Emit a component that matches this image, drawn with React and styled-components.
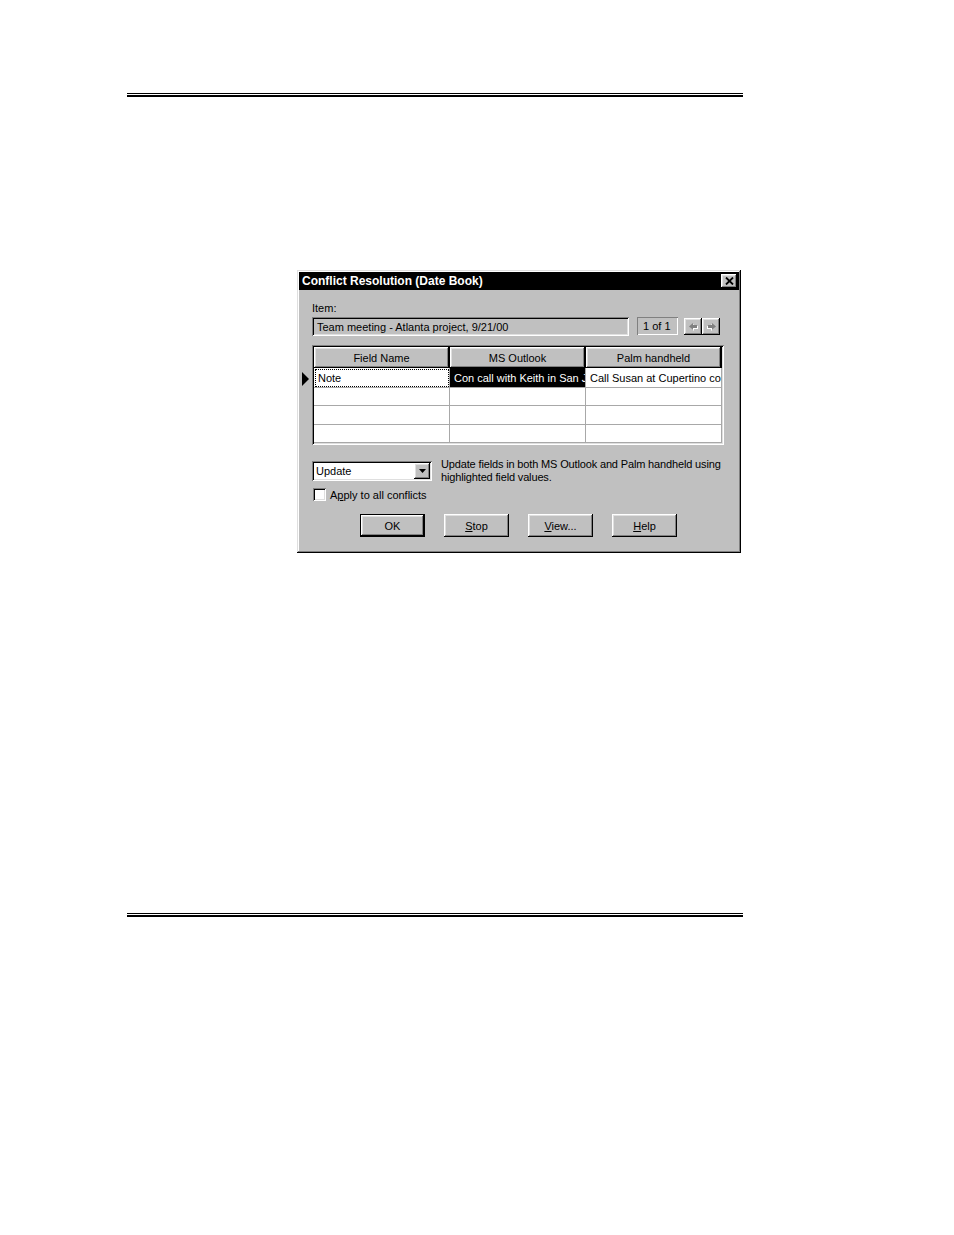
import React from "react";
import styled, { createGlobalStyle } from "styled-components";

const GlobalStyle = createGlobalStyle`
  html, body {
    margin: 0;
    padding: 0;
    background: #fff;
  }
  body {
    font-family: "Liberation Sans", Arial, sans-serif;
    font-size: 11px;
    color: #000;
  }
`;

const raised = `
  box-shadow: inset -1px -1px #000, inset 1px 1px #fff,
    inset -2px -2px #808080, inset 2px 2px #dfdfdf;
`;

const sunken = `
  box-shadow: inset 1px 1px #808080, inset -1px -1px #fff,
    inset 2px 2px #000, inset -2px -2px #dfdfdf;
`;

const Page = styled.div`
  width: 954px;
  height: 1235px;
  box-sizing: border-box;
  padding: 93px 0 0 127px;
  background: #fff;
`;

const Rule = styled.div`
  width: 616px;
  height: 4px;
  box-sizing: border-box;
  border-top: 1px solid #000;
  border-bottom: 2px solid #000;
  margin-top: ${(p) => p.$top || 0}px;
`;

const Dialog = styled.div`
  margin: 173px 0 0 170px;
  width: 444px;
  height: 283px;
  box-sizing: border-box;
  padding: 2px;
  background: #c0c0c0;
  box-shadow: inset -1px -1px #000, inset 1px 1px #dfdfdf,
    inset -2px -2px #808080, inset 2px 2px #fff;
  display: flex;
  flex-direction: column;
`;

const TitleBar = styled.div`
  height: 18px;
  background: #000;
  color: #fff;
  font-weight: bold;
  font-size: 12px;
  display: flex;
  align-items: center;
  justify-content: space-between;
  padding: 0 2px 0 3px;
`;

const CloseButton = styled.div`
  width: 16px;
  height: 14px;
  background: #c0c0c0;
  ${raised}
  display: flex;
  align-items: center;
  justify-content: center;
`;

const Body = styled.div`
  padding: 0 15px 0 13px;
  display: flex;
  flex-direction: column;
`;

const Label = styled.div`
  margin-top: 11px;
  line-height: 14px;
  height: 14px;
`;

const ItemRow = styled.div`
  margin-top: 2px;
  display: flex;
  align-items: flex-start;
`;

const Field = styled.div`
  flex-shrink: 0;
  width: ${(p) => p.$w}px;
  height: ${(p) => p.$h || 19}px;
  box-sizing: border-box;
  background: ${(p) => (p.$white ? "#fff" : "#c0c0c0")};
  ${sunken}
  display: flex;
  align-items: center;
  padding-left: 5px;
  white-space: nowrap;
  overflow: hidden;
`;

const Counter = styled.div`
  flex-shrink: 0;
  margin-left: 8px;
  width: 41px;
  height: 18px;
  box-sizing: border-box;
  box-shadow: inset 1px 1px #808080, inset -1px -1px #fff;
  display: flex;
  align-items: center;
  padding-left: 6px;
`;

const NavGroup = styled.div`
  margin: 1px 0 0 6px;
  display: flex;
`;

const NavButton = styled.div`
  width: 18px;
  height: 17px;
  background: #c0c0c0;
  ${raised}
  display: flex;
  align-items: center;
  justify-content: center;
`;

const GridWrap = styled.div`
  position: relative;
  margin-top: 9px;
  width: 412px;
  height: 100px;
  box-sizing: border-box;
  padding: 2px;
  background: #c0c0c0;
  box-shadow: inset 1px 1px #808080, inset -1px -1px #fff,
    inset 2px 2px #000, inset -2px -2px #dfdfdf;
`;

const RowMarker = styled.div`
  position: absolute;
  left: -10px;
  top: 27px;
  width: 0;
  height: 0;
  border-top: 7px solid transparent;
  border-bottom: 7px solid transparent;
  border-left: 7px solid #000;
`;

const GridRow = styled.div`
  display: flex;
  height: ${(p) => p.$h}px;
  background: ${(p) => (p.$head ? "#c0c0c0" : "#fff")};
`;

const HeadCell = styled.div`
  width: 136px;
  box-sizing: border-box;
  ${raised}
  display: flex;
  align-items: center;
  justify-content: center;
  border-right: 1px solid #000;
`;

const Cell = styled.div`
  width: 136px;
  box-sizing: border-box;
  border-right: 1px solid #a8a8a8;
  border-bottom: 1px solid #a8a8a8;
  padding-left: 4px;
  white-space: nowrap;
  overflow: hidden;
  display: flex;
  align-items: center;
  background: ${(p) => (p.$selected ? "#000" : "#fff")};
  color: ${(p) => (p.$selected ? "#fff" : "#000")};
  outline: ${(p) => (p.$focus ? "1px dotted #000" : "none")};
  outline-offset: -2px;
`;

const OptionsRow = styled.div`
  margin-top: 13px;
  display: flex;
  align-items: flex-start;
`;

const Select = styled.div`
  flex-shrink: 0;
  margin-top: 3px;
  width: 120px;
  height: 20px;
  box-sizing: border-box;
  background: #fff;
  ${sunken}
  display: flex;
  align-items: center;
  justify-content: space-between;
  padding: 2px 2px 2px 4px;
`;

const SelectArrow = styled.div`
  width: 16px;
  height: 16px;
  background: #c0c0c0;
  ${raised}
  display: flex;
  align-items: center;
  justify-content: center;
`;

const Description = styled.div`
  margin-left: 9px;
  line-height: 13px;
  white-space: nowrap;
  letter-spacing: -0.15px;
`;

const CheckRow = styled.div`
  margin-top: 4px;
  display: flex;
  align-items: center;
  padding-left: 1px;
`;

const CheckBox = styled.div`
  width: 13px;
  height: 13px;
  box-sizing: border-box;
  background: #fff;
  ${sunken}
  margin-right: 4px;
`;

const ButtonRow = styled.div`
  margin-top: 13px;
  display: flex;
  justify-content: center;
  gap: 19px;
  padding-left: 1px;
`;

const Button = styled.div`
  width: 65px;
  height: 23px;
  box-sizing: border-box;
  background: #c0c0c0;
  display: flex;
  align-items: center;
  justify-content: center;
  ${(p) =>
    p.$default
      ? `box-shadow: inset 0 0 0 1px #000, inset -2px -2px #000, inset 2px 2px #fff,
          inset -3px -3px #808080, inset 3px 3px #dfdfdf;`
      : raised}
`;

const Arrow = ({ dir }) => (
  <svg width="9" height="8" viewBox="0 0 9 8">
    <g transform={dir === "left" ? "" : "translate(9 0) scale(-1 1)"}>
      <path d="M4 0 L4 2 L8 2 L8 5 L4 5 L4 7 L0 3.5 Z" fill="#fff" transform="translate(1 1)" />
      <path d="M4 0 L4 2 L8 2 L8 5 L4 5 L4 7 L0 3.5 Z" fill="#808080" />
    </g>
  </svg>
);

const rows = [
  { h: 20, cells: [{ text: "Note", focus: true }, { text: "Con call with Keith in San Jose", selected: true }, { text: "Call Susan at Cupertino conference" }] },
  { h: 18, cells: [{}, {}, {}] },
  { h: 19, cells: [{}, {}, {}] },
  { h: 18, cells: [{}, {}, {}] },
];

const App = () => (
  <>
    <GlobalStyle />
    <Page>
      <Rule />
      <Dialog>
        <TitleBar>
          <span>Conflict Resolution (Date Book)</span>
          <CloseButton>
            <svg width="9" height="8" viewBox="0 0 9 8">
              <path d="M1 0.5 L8 7.5 M8 0.5 L1 7.5" stroke="#000" strokeWidth="1.8" />
            </svg>
          </CloseButton>
        </TitleBar>
        <Body>
          <Label>Item:</Label>
          <ItemRow>
            <Field $w={317}>Team meeting - Atlanta project, 9/21/00</Field>
            <Counter>1 of 1</Counter>
            <NavGroup>
              <NavButton>
                <Arrow dir="left" />
              </NavButton>
              <NavButton>
                <Arrow dir="right" />
              </NavButton>
            </NavGroup>
          </ItemRow>
          <GridWrap>
            <RowMarker />
            <GridRow $head $h={21}>
              <HeadCell>Field Name</HeadCell>
              <HeadCell>MS Outlook</HeadCell>
              <HeadCell>Palm handheld</HeadCell>
            </GridRow>
            {rows.map((row, i) => (
              <GridRow key={i} $h={row.h}>
                {row.cells.map((c, j) => (
                  <Cell key={j} $focus={c.focus} $selected={c.selected}>
                    {c.text}
                  </Cell>
                ))}
              </GridRow>
            ))}
          </GridWrap>
          <OptionsRow>
            <Select>
              <span>Update</span>
              <SelectArrow>
                <svg width="7" height="4" viewBox="0 0 7 4">
                  <path d="M0 0 L7 0 L3.5 4 Z" fill="#000" />
                </svg>
              </SelectArrow>
            </Select>
            <Description>
              Update fields in both MS Outlook and Palm handheld using
              <br />
              highlighted field values.
            </Description>
          </OptionsRow>
          <CheckRow>
            <CheckBox />
            <span>
              A<u>p</u>ply to all conflicts
            </span>
          </CheckRow>
          <ButtonRow>
            <Button $default>OK</Button>
            <Button>
              <span>
                <u>S</u>top
              </span>
            </Button>
            <Button>
              <span>
                <u>V</u>iew...
              </span>
            </Button>
            <Button>
              <span>
                <u>H</u>elp
              </span>
            </Button>
          </ButtonRow>
        </Body>
      </Dialog>
      <Rule $top={360} />
    </Page>
  </>
);

export default App;
